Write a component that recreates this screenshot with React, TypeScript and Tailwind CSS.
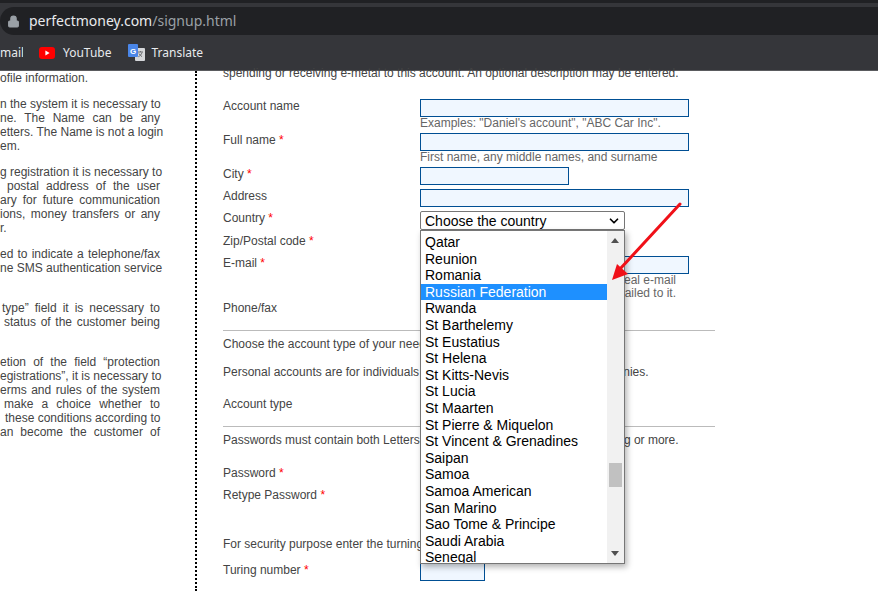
import { ChevronDown, Lock } from 'lucide-react'

const leftParagraphs = [
  { className: 'h-[26px]', lines: [{ text: 'ofile information.', className: 'text-left' }] },
  {
    className: 'h-[68px]',
    lines: [
      { text: 'n the system it is necessary to' },
      { text: 'ne. The Name can be any' },
      { text: 'etters. The Name is not a login' },
      { text: 'em.', className: 'text-left' },
    ],
  },
  {
    className: 'h-[82px]',
    lines: [
      { text: 'g registration it is necessary to' },
      { text: 'postal address of the user', className: 'pl-[7px]' },
      { text: 'ary for future communication' },
      { text: 'ions, money transfers or any' },
      { text: 'r.', className: 'text-left' },
    ],
  },
  {
    className: 'h-[54px]',
    lines: [
      { text: 'ed to indicate a telephone/fax' },
      { text: 'ne SMS authentication service' },
    ],
  },
  {
    className: 'h-[54px]',
    lines: [
      { text: 'type” field it is necessary to', className: 'pl-[2px]' },
      { text: 'status of the customer being', className: 'pl-[4px]' },
    ],
  },
  {
    className: 'h-[84px]',
    lines: [
      { text: 'etion of the field “protection' },
      { text: 'egistrations”, it is necessary to' },
      { text: 'erms and rules of the system' },
      { text: 'make a choice whether to', className: 'pl-[4px]' },
      { text: 'these conditions according to', className: 'pl-[5px]' },
      { text: 'an become the customer of' },
    ],
  },
]

const countries = [
  'Qatar', 'Reunion', 'Romania', 'Russian Federation', 'Rwanda', 'St Barthelemy', 'St Eustatius',
  'St Helena', 'St Kitts-Nevis', 'St Lucia', 'St Maarten', 'St Pierre & Miquelon',
  'St Vincent & Grenadines', 'Saipan', 'Samoa', 'Samoa American', 'San Marino',
  'Sao Tome & Principe', 'Saudi Arabia', 'Senegal',
]

function Field({ className }: { className: string }) {
  return <div className={`h-[18px] border border-[#004f94] bg-[#f0f7ff] ${className}`} />
}

function Hint({ children }: { children: React.ReactNode }) {
  return <p className="text-[12px] leading-[13px] text-[#666]">{children}</p>
}

function Row({
  label,
  required,
  height,
  labelClass = '',
  children,
}: {
  label: string
  required?: boolean
  height: string
  labelClass?: string
  children?: React.ReactNode
}) {
  return (
    <div className={`flex ${height}`}>
      <div className={`w-[197px] ${labelClass}`}>
        {label}
        {required && <span className="text-[#f00]"> *</span>}
      </div>
      <div className="flex-1">{children}</div>
    </div>
  )
}

function BrowserChrome() {
  return (
    <header className="h-[71px] shrink-0 border-b border-[#5a5b5e] bg-[#35363a] font-['Noto_Sans',sans-serif] text-[#e8eaed]">
      <div className="h-[3px] bg-[#202124]" />
      <div className="mt-[4px] flex h-[28px] items-center rounded-l-[14px] bg-[#202124] pl-[7px]">
        <Lock size={13} className="fill-[#9aa0a6] text-[#9aa0a6]" />
        <span className="ml-[9px] text-[14px]">
          perfectmoney.com<span className="text-[#9aa0a6]">/signup.html</span>
        </span>
      </div>
      <div className="flex h-[35px] items-center text-[12px]">
        <span className="w-[23px] overflow-hidden whitespace-nowrap">mail</span>
        <svg width="16" height="12" viewBox="0 0 16 12" className="ml-[16px]">
          <rect width="16" height="12" rx="3" fill="#f00" />
          <path d="M6.4 3.4 10.6 6 6.4 8.6Z" fill="#fff" />
        </svg>
        <span className="ml-[8px]">YouTube</span>
        <svg width="17" height="17" viewBox="0 0 17 17" className="ml-[16px]">
          <rect x="7" y="4" width="10" height="13" rx="1" fill="#d5d7da" />
          <path d="M10 8h5M12.5 7v1M14 8.5c-.6 2-2 3.4-3.6 4.2M11 9.5c.6 1.300 1.700 2.500 3 3.100" stroke="#6b6d70" strokeWidth="1" fill="none" />
          <rect width="10" height="13" rx="1" fill="#4a86e8" />
          <text x="5" y="9.500" textAnchor="middle" fontSize="8" fontWeight="700" fill="#fff" fontFamily="Liberation Sans, sans-serif">G</text>
        </svg>
        <span className="ml-[7px]">Translate</span>
      </div>
    </header>
  )
}

function CountryPopup() {
  return (
    <div className="absolute left-[420px] top-[159px] flex h-[334px] w-[205px] border border-[#767676] bg-white text-[14px] text-black shadow-[2px_3px_6px_rgba(0,0,0,0.3)]">
      <ul className="h-full w-[186px] overflow-hidden pt-[3px]">
        {countries.map((name) => (
          <li
            key={name}
            className={`h-[16.6px] whitespace-nowrap pl-[4px] leading-[16.6px] ${
              name === 'Russian Federation' ? 'bg-[#1e90ff] text-white' : ''
            }`}
          >
            {name}
          </li>
        ))}
      </ul>
      <div className="relative h-full flex-1 bg-[#f1f1f1]">
        <div className="absolute left-[4px] top-[7px] h-0 w-0 border-x-[4px] border-b-[5px] border-x-transparent border-b-[#505050]" />
        <div className="absolute left-[2px] top-[232px] h-[24px] w-[13px] bg-[#c1c1c1]" />
        <div className="absolute bottom-[7px] left-[4px] h-0 w-0 border-x-[4px] border-t-[5px] border-x-transparent border-t-[#505050]" />
      </div>
    </div>
  )
}

export default function App() {
  return (
    <div className="flex h-[591px] w-[878px] flex-col overflow-hidden bg-white font-['Liberation_Sans',Arial,sans-serif] text-[12px] leading-[14px] text-[#444]">
      <BrowserChrome />
      <main className="relative flex min-h-0 flex-1">
        <aside className="w-[160px] shrink-0 pt-[-1px]">
          {leftParagraphs.map((para, i) => (
            <div key={i} className={para.className}>
              {para.lines.map((line) => (
                <p
                  key={line.text}
                  className={`h-[14px] whitespace-nowrap ${line.className ?? ''} ${
                    line.className === 'text-left' ? '' : 'text-justify [text-align-last:justify]'
                  }`}
                >
                  {line.text}
                </p>
              ))}
            </div>
          ))}
        </aside>
        <div className="ml-[35px] w-0 border-l-2 border-dotted border-black" />
        <section className="ml-[26px] w-[492px] -mt-[5px]">
          <p className="h-[33px]">spending or receiving e-metal to this account. An optional description may be entered.</p>

          <Row label="Account name" height="h-[34px]">
            <Field className="w-[269px]" />
            <Hint>Examples: "Daniel's account", "ABC Car Inc".</Hint>
          </Row>
          <Row label="Full name" height="h-[34px]" required>
            <Field className="w-[269px]" />
            <Hint>First name, any middle names, and surname</Hint>
          </Row>
          <Row label="City" height="h-[22px]" required>
            <Field className="w-[149px]" />
          </Row>
          <Row label="Address" height="h-[22px]">
            <Field className="w-[269px]" />
          </Row>
          <Row label="Country" height="h-[23px]" required>
            <div className="flex h-[19px] w-[205px] items-center justify-between rounded-[2px] border border-[#767676] bg-white pl-[4px] pr-[3px] text-[14px] text-black">
              Choose the country
              <ChevronDown size={14} strokeWidth={3} />
            </div>
          </Row>
          <Row label="Zip/Postal code" height="h-[22px]" required />
          <Row label="E-mail" height="h-[45px]" required>
            <Field className="w-[269px]" />
            <div className="mt-[-1px] w-[256px] pt-[1px] text-right">
              <Hint>
                Please enter your real e-mail
                <br />
                address. Details will be mailed to it.
              </Hint>
            </div>
          </Row>
          <Row label="Phone/fax" height="h-[29px]" />

          <hr className="h-px border-0 bg-[#bbb]" />
          <p className="mt-[6px] h-[14px]">Choose the account type of your needs.</p>
          <p className="mt-[14px] h-[14px]">Personal accounts are for individuals and Business accounts are for companies.</p>
          <p className="mt-[18px] h-[14px]">Account type</p>
          <hr className="mt-[15px] h-px border-0 bg-[#bbb]" />
          <p className="mt-[6px] h-[14px]">Passwords must contain both Letters and Numbers and be 8 characters long or more.</p>
          <div className="mt-[19px]">
            <Row label="Password" height="h-[22px]" required />
            <Row label="Retype Password" height="h-[49px]" required />
          </div>
          <p className="h-[26px]">For security purpose enter the turning number shown below.</p>
          <Row label="Turing number" height="h-[22px]" required>
            <Field className="w-[65px]" />
          </Row>
        </section>
        <CountryPopup />
        <svg width="80" height="85" viewBox="0 0 80 85" className="absolute left-[608px] top-[130px]" fill="none">
          <path d="M72 3 12 68" stroke="#f01018" strokeWidth="3" strokeLinecap="round" />
          <path d="M4 79 9 63 20 73Z" fill="#f01018" />
        </svg>
      </main>
    </div>
  )
}
